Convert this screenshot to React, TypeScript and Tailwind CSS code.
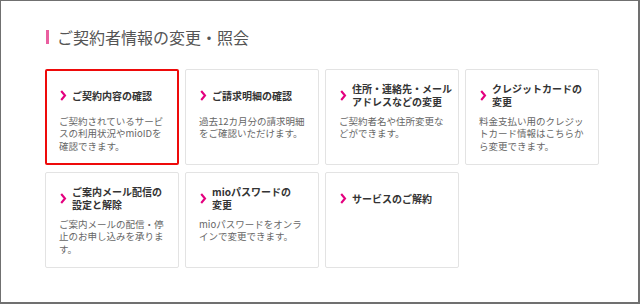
type Card = {
  title: string[];
  body: string[];
  active?: boolean;
};

const cards: Card[] = [
  {
    title: ["ご契約内容の確認"],
    body: ["ご契約されているサービ", "スの利用状況やmioIDを", "確認できます。"],
    active: true,
  },
  {
    title: ["ご請求明細の確認"],
    body: ["過去12カ月分の請求明細", "をご確認いただけます。"],
  },
  {
    title: ["住所・連絡先・メール", "アドレスなどの変更"],
    body: ["ご契約者名や住所変更な", "どができます。"],
  },
  {
    title: ["クレジットカードの", "変更"],
    body: ["料金支払い用のクレジッ", "トカード情報はこちらか", "ら変更できます。"],
  },
  {
    title: ["ご案内メール配信の", "設定と解除"],
    body: ["ご案内メールの配信・停", "止のお申し込みを承りま", "す。"],
  },
  {
    title: ["mioパスワードの", "変更"],
    body: ["mioパスワードをオンラ", "インで変更できます。"],
  },
  {
    title: ["サービスのご解約"],
    body: [],
  },
];

function Chevron() {
  return (
    <svg width="7" height="11" viewBox="0 0 7 11" className="shrink-0 ml-[1px]">
      <polyline points="1.2,1 5,5.5 1.2,10" fill="none" stroke="#e4007f" strokeWidth="2.1" />
    </svg>
  );
}

function MenuCard({ card }: { card: Card }) {
  return (
    <div
      className={`h-[96px] rounded-[2px] bg-white ${
        card.active
          ? "border-2 border-[#ee0a0a] pt-[11px] pl-[12px]"
          : "border border-[#e3e3e3] pt-[12px] pl-[13px]"
      }`}
    >
      <div className="h-[26px] flex items-center">
        <Chevron />
        <div className="ml-[5px] text-[10px] leading-[13px] font-bold text-[#333] whitespace-nowrap">
          {card.title.map((t) => (
            <div key={t}>{t}</div>
          ))}
        </div>
      </div>
      {card.body.length > 0 && (
        <div className="mt-[7px] text-[9.5px] leading-[12.3px] text-[#666] whitespace-nowrap">
          {card.body.map((b) => (
            <div key={b}>{b}</div>
          ))}
        </div>
      )}
    </div>
  );
}

export default function App() {
  return (
    <div
      className="w-[640px] h-[304px] bg-white border-l border-t border-r-2 border-b-2 border-[#707070] pl-[44px] pt-[29px]"
      style={{ fontFamily: '"Noto Sans CJK JP", "Noto Sans", sans-serif' }}
    >
      <div className="h-[14px] flex items-center">
        <div className="w-[3px] h-[14px] ml-[1px] bg-[#ea5fa0]" />
        <h2 className="ml-[8px] text-[16px] leading-[14px] text-[#555] whitespace-nowrap">
          ご契約者情報の変更・照会
        </h2>
      </div>
      <div className="mt-[25px] grid grid-cols-[repeat(4,134px)] gap-x-[6px] gap-y-[7px]">
        {cards.map((c) => (
          <MenuCard key={c.title.join("")} card={c} />
        ))}
      </div>
    </div>
  );
}
